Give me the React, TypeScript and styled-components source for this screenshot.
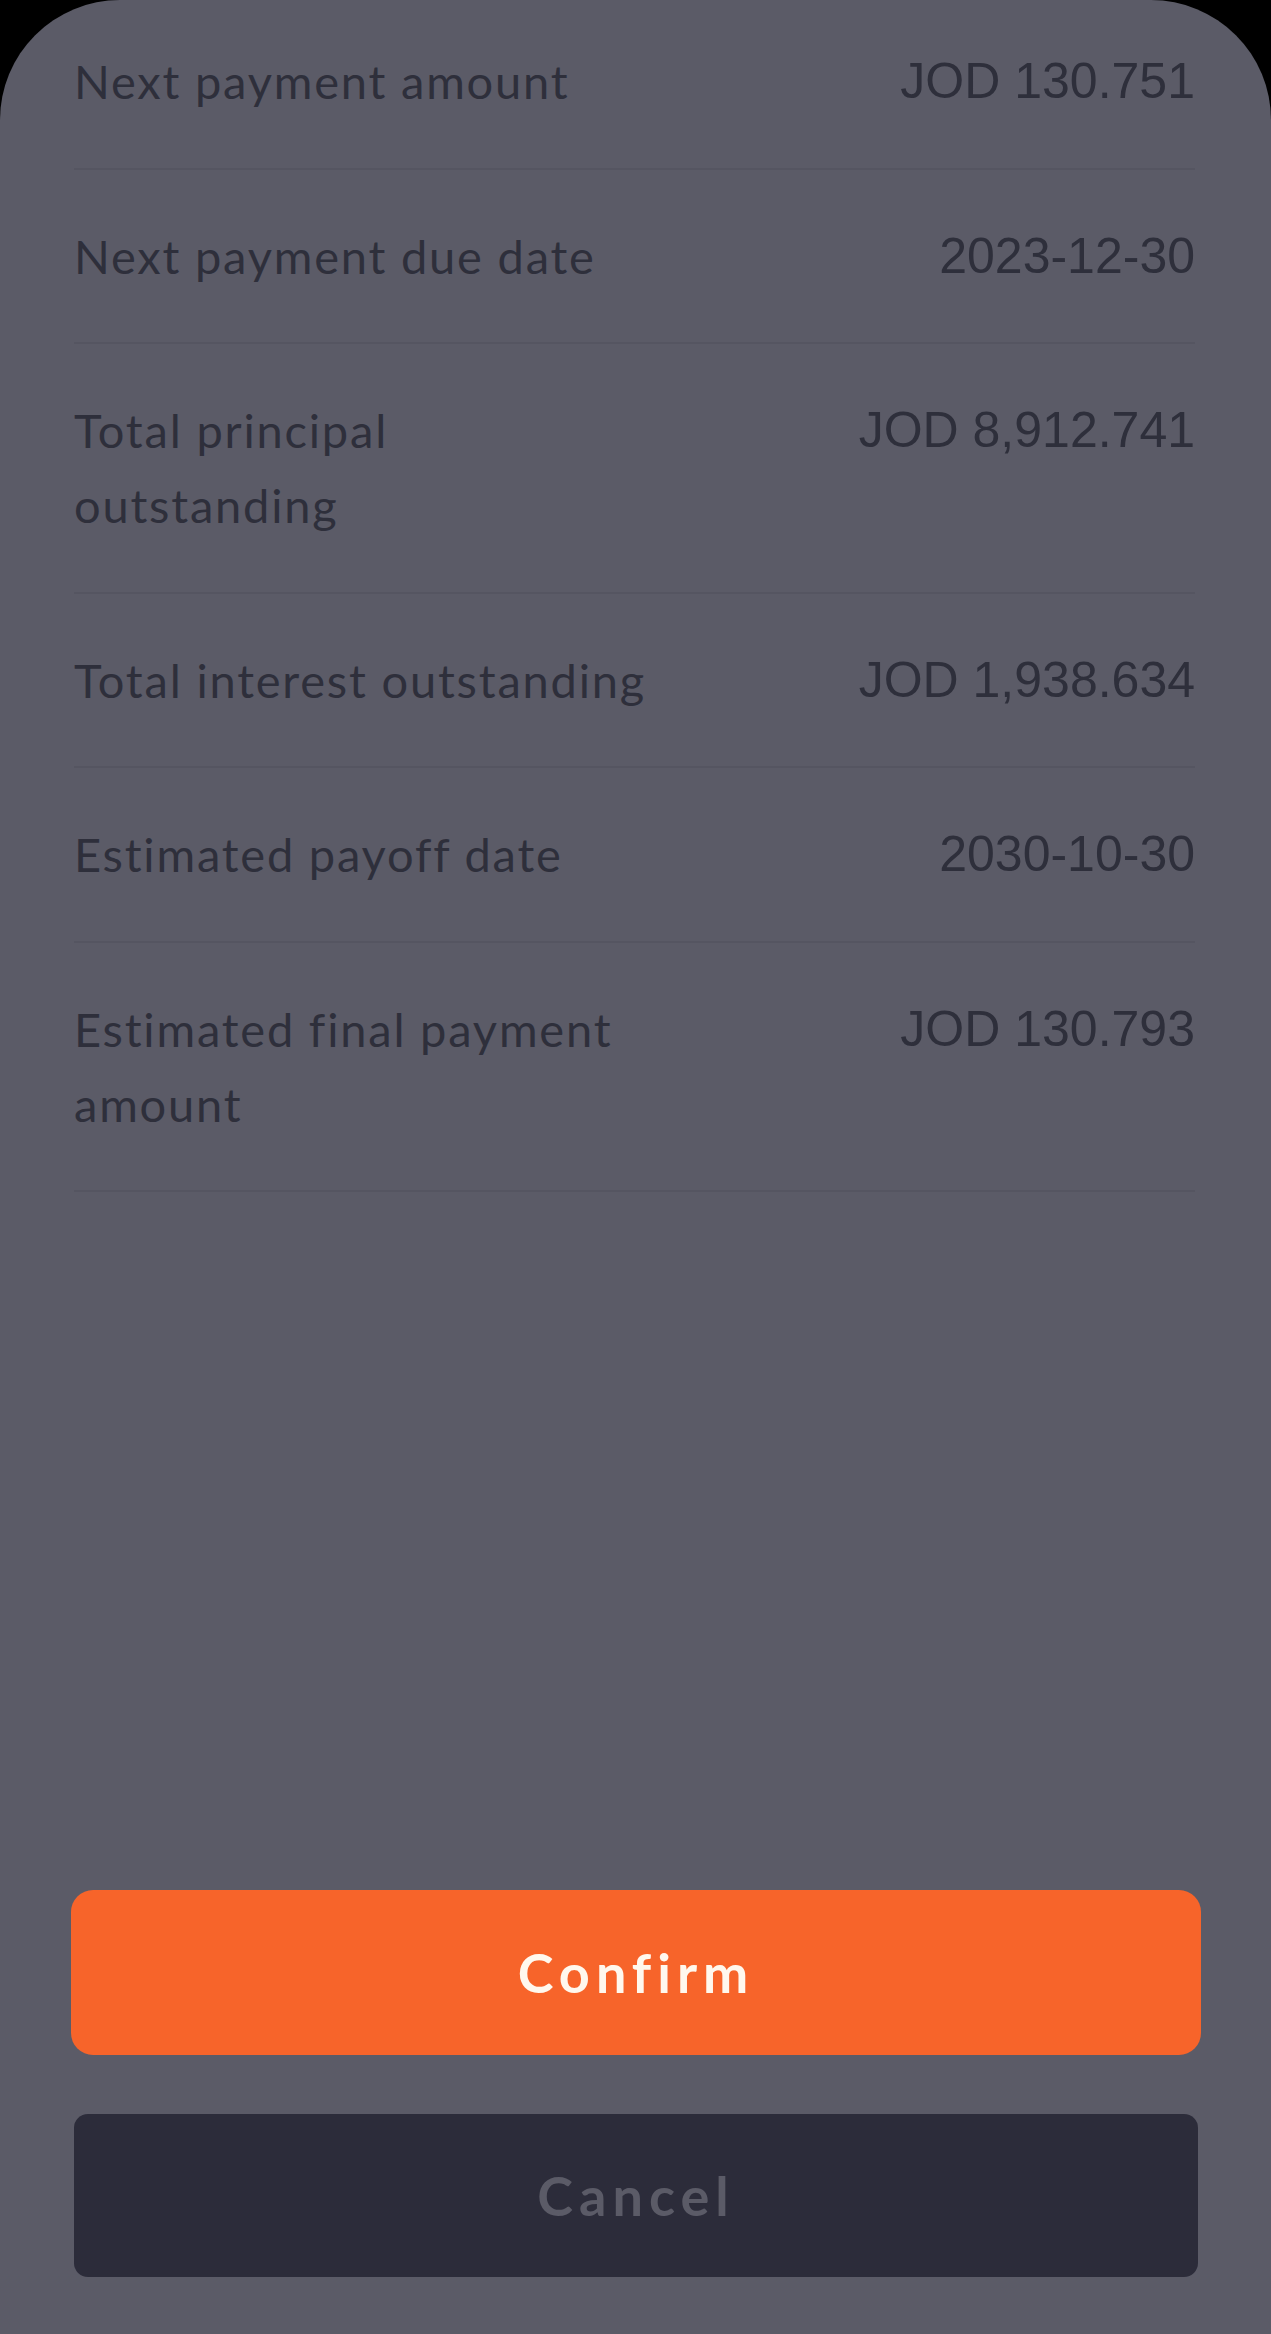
import React from 'react';
import styled, { createGlobalStyle } from 'styled-components';

const GlobalStyle = createGlobalStyle`
  html, body {
    margin: 0;
    padding: 0;
    background: #000;
  }
  * {
    box-sizing: border-box;
  }
`;

const Sheet = styled.div`
  min-height: 100vh;
  display: flex;
  flex-direction: column;
  background: #5b5b67;
  border-radius: 120px 120px 0 0;
  overflow: hidden;
`;

const List = styled.div`
  display: flex;
  flex-direction: column;
  margin-top: -5px;
  padding: 0 76px 0 74px;
`;

const Row = styled.div`
  display: flex;
  justify-content: space-between;
  align-items: flex-start;
  padding: 49px 0 48.5px;
  border-bottom: 2px solid #555561;
`;

const Label = styled.div`
  font-family: Lato, 'Open Sans', sans-serif;
  font-size: 47px;
  line-height: 75px;
  letter-spacing: 1.8px;
  color: #2e2f3b;
  white-space: pre-line;
`;

const Value = styled.div`
  font-family: 'Liberation Sans', Arial, sans-serif;
  font-size: 50px;
  line-height: 75px;
  color: #2e2f3b;
  text-align: right;
  white-space: nowrap;
`;

const Actions = styled.div`
  margin-top: auto;
  display: flex;
  flex-direction: column;
  gap: 59px;
  padding: 0 70px 57px 71px;
`;

const Button = styled.button<{ $variant: 'primary' | 'secondary' }>`
  display: flex;
  align-items: center;
  justify-content: center;
  height: ${p => (p.$variant === 'primary' ? '165px' : '163px')};
  margin: ${p => (p.$variant === 'primary' ? '0' : '0 3px')};
  width: ${p => (p.$variant === 'primary' ? '100%' : 'calc(100% - 6px)')};
  border: none;
  border-radius: ${p => (p.$variant === 'primary' ? '22px' : '14px')};
  background: ${p => (p.$variant === 'primary' ? '#f7642a' : '#2c2c3a')};
  color: ${p => (p.$variant === 'primary' ? '#fff8ee' : '#5b5b67')};
  font-family: Lato, 'Open Sans', sans-serif;
  font-size: 54px;
  font-weight: 700;
  letter-spacing: 6px;
  cursor: pointer;
`;

const rows = [
  { label: 'Next payment amount', value: 'JOD 130.751' },
  { label: 'Next payment due date', value: '2023-12-30' },
  { label: 'Total principal\noutstanding', value: 'JOD 8,912.741' },
  { label: 'Total interest outstanding', value: 'JOD 1,938.634' },
  { label: 'Estimated payoff date', value: '2030-10-30' },
  { label: 'Estimated final payment\namount', value: 'JOD 130.793' },
];

export default function App() {
  return (
    <>
      <GlobalStyle />
      <Sheet>
        <List>
          {rows.map(r => (
            <Row key={r.label}>
              <Label>{r.label}</Label>
              <Value>{r.value}</Value>
            </Row>
          ))}
        </List>
        <Actions>
          <Button $variant="primary">Confirm</Button>
          <Button $variant="secondary">Cancel</Button>
        </Actions>
      </Sheet>
    </>
  );
}
